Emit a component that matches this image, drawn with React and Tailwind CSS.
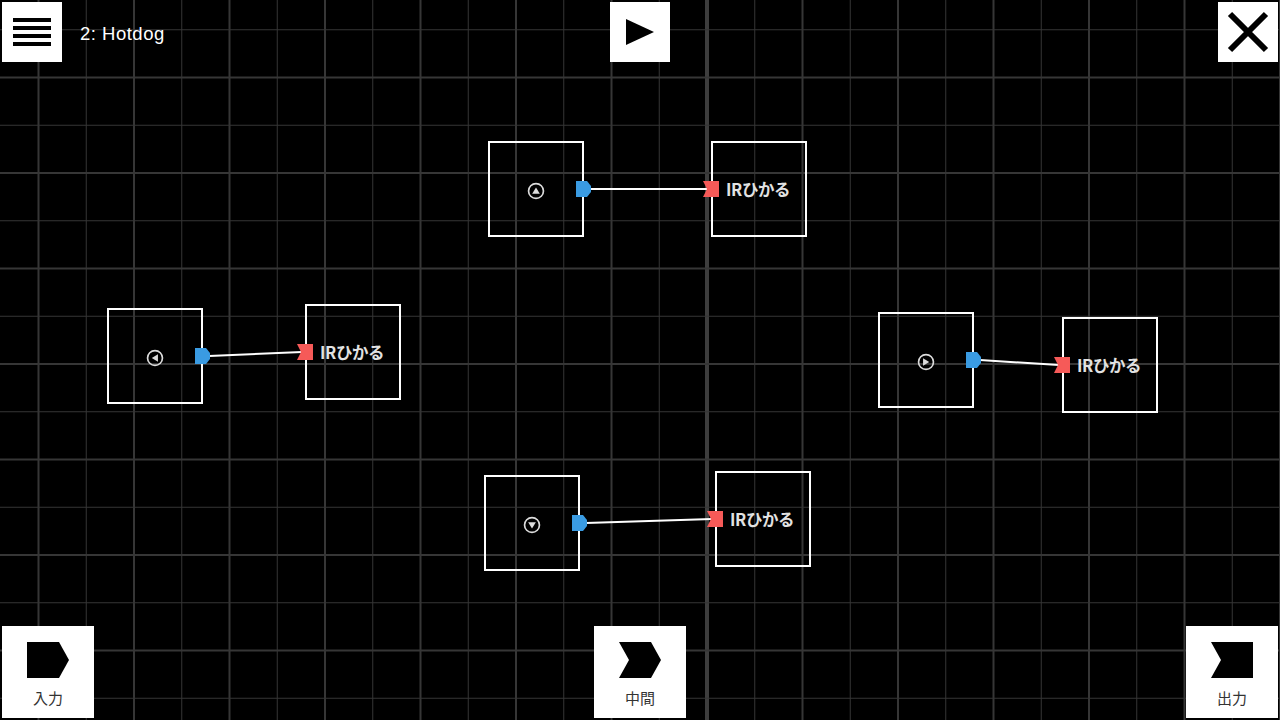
import React from "react";

const W = 1280;
const H = 720;
const OX = 707; // canvas origin
const OY = 364;
const STEP = 47.75;

const nodes = [
  { id: 1, dir: "up", inX: 488, inY: 141, outX: 711, outY: 141 },
  { id: 2, dir: "left", inX: 107, inY: 308, outX: 305, outY: 304 },
  { id: 3, dir: "right", inX: 878, inY: 312, outX: 1062, outY: 317 },
  { id: 4, dir: "down", inX: 484, inY: 475, outX: 715, outY: 471 },
];

// Grid lines, minor every STEP, major every 2 steps
function Grid() {
  const lines = [];
  for (let i = -16; i <= 16; i++) {
    const x = OX + i * STEP;
    if (x < -4 || x > W + 4) continue;
    const major = i % 2 === 0;
    lines.push(
      <line
        key={"v" + i}
        x1={x}
        y1={0}
        x2={x}
        y2={H}
        stroke={i === 0 ? "#3d3d3d" : "#363636"}
        strokeWidth={i === 0 ? 4 : major ? 2 : 1}
      />
    );
  }
  for (let j = -10; j <= 10; j++) {
    const y = OY + j * STEP;
    if (y < -4 || y > H + 4) continue;
    const major = j % 2 === 0;
    lines.push(
      <line
        key={"h" + j}
        x1={0}
        y1={y}
        x2={W}
        y2={y}
        stroke="#363636"
        strokeWidth={major ? 2 : 1}
      />
    );
  }
  return lines;
}

function DirIcon({ dir }) {
  const tri = {
    up: "M7 4.2 L10 9.2 L4 9.2 Z",
    down: "M7 9.8 L10 4.8 L4 4.8 Z",
    left: "M4.5 7 L9.3 4 L9.3 10 Z",
    right: "M9.5 7 L4.7 4 L4.7 10 Z",
  }[dir];
  return (
    <svg width="18" height="18" viewBox="0 0 14 14">
      <circle cx="7" cy="7" r="5.8" fill="none" stroke="#dcdcdc" strokeWidth="1.3" />
      <path d={tri} fill="#dcdcdc" />
    </svg>
  );
}

function OutPort() {
  return (
    <svg width="15" height="16" viewBox="0 0 15 16" className="absolute">
      <path d="M0 0 H11 L15 5 V11 L11 16 H0 Z" fill="#3a9be2" />
    </svg>
  );
}

function InPort() {
  return (
    <svg width="16" height="16" viewBox="0 0 16 16" className="absolute">
      <path d="M0 0 H16 V16 H0 L4 8 Z" fill="#f65a58" />
    </svg>
  );
}

function NodePair({ n }) {
  return (
    <>
      <div
        className="absolute w-[96px] h-[96px] border-2 border-white flex items-center justify-center pt-[3px]"
        style={{ left: n.inX, top: n.inY }}
      >
        <DirIcon dir={n.dir} />
      </div>
      <div
        className="absolute w-[96px] h-[96px] border-2 border-white flex items-center pl-[13px] pt-[1px] text-[16.5px] font-bold text-[#e2e2e2] tracking-[-0.4px]"
        style={{ left: n.outX, top: n.outY, fontFamily: "'Noto Sans CJK JP', 'Noto Sans', sans-serif" }}
      >
        IRひかる
      </div>
      <div className="absolute" style={{ left: n.inX + 88, top: n.inY + 40 }}>
        <OutPort />
      </div>
      <div className="absolute" style={{ left: n.outX - 8, top: n.outY + 40 }}>
        <InPort />
      </div>
    </>
  );
}

function ToolButton({ label, shape }) {
  const d = {
    in: "M0 0 H32 L42 18 L32 36 H0 Z",
    mid: "M0 0 H32 L42 18 L32 36 H0 L10 18 Z",
    out: "M0 0 H42 V36 H0 L10 18 Z",
  }[shape];
  return (
    <div className="w-[92px] h-[92px] bg-white flex flex-col items-center pt-[16px]">
      <svg width="42" height="36" viewBox="0 0 42 36">
        <path d={d} fill="#000" />
      </svg>
      <span
        className="mt-[10px] text-[15px] leading-[20px] text-[#333]"
        style={{ fontFamily: "'Noto Sans CJK JP', sans-serif" }}
      >
        {label}
      </span>
    </div>
  );
}

export default function App() {
  return (
    <div
      className="relative w-[1280px] h-[720px] bg-black overflow-hidden"
      style={{ fontFamily: "'Liberation Sans', Arial, sans-serif" }}
    >
      <svg className="absolute inset-0" width={W} height={H}>
        <Grid />
        {nodes.map((n) => (
          <line
            key={n.id}
            x1={n.inX + 102}
            y1={n.inY + 48}
            x2={n.outX - 3}
            y2={n.outY + 48}
            stroke="#fff"
            strokeWidth="2"
          />
        ))}
      </svg>

      {nodes.map((n) => (
        <NodePair key={n.id} n={n} />
      ))}

      <div className="absolute inset-0 flex flex-col justify-between p-[2px]">
        {/* top bar */}
        <div className="grid grid-cols-[1fr_auto_1fr] items-start">
          <div className="flex items-center">
            <button className="w-[60px] h-[60px] bg-white flex flex-col items-center justify-center gap-[4.5px]">
              <span className="block w-[38px] h-[3.5px] bg-black" />
              <span className="block w-[38px] h-[3.5px] bg-black" />
              <span className="block w-[38px] h-[3.5px] bg-black" />
              <span className="block w-[38px] h-[3.5px] bg-black" />
            </button>
            <span className="ml-[18px] mt-[4px] text-[18.5px] tracking-[0.5px] text-white">2: Hotdog</span>
          </div>
          <button className="w-[60px] h-[60px] bg-white flex items-center justify-center">
            <svg width="60" height="60" viewBox="0 0 60 60">
              <path d="M16 17 L44 30 L16 43 Z" fill="#000" />
            </svg>
          </button>
          <div className="flex justify-end">
            <button className="w-[60px] h-[60px] bg-white flex items-center justify-center">
              <svg width="60" height="60" viewBox="0 0 60 60">
                <path d="M12 12 L48 48 M48 12 L12 48" stroke="#000" strokeWidth="6" />
              </svg>
            </button>
          </div>
        </div>

        {/* bottom bar */}
        <div className="flex justify-between items-end">
          <ToolButton label="入力" shape="in" />
          <ToolButton label="中間" shape="mid" />
          <ToolButton label="出力" shape="out" />
        </div>
      </div>
    </div>
  );
}
